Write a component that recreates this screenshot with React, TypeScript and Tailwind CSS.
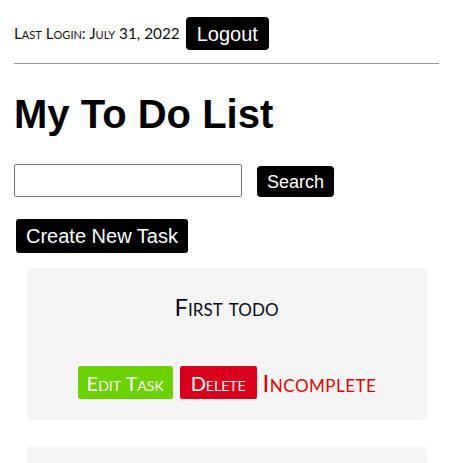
import React, { useState } from "react";

type Todo = { id: number; title: string; done: boolean };

const sc = { fontFamily: "Lato, 'Open Sans', sans-serif", fontVariant: "small-caps" } as const;

export default function App() {
  const [query, setQuery] = useState("");
  const [todos] = useState<Todo[]>([
    { id: 1, title: "First todo", done: false },
    { id: 2, title: "Second todo", done: false },
  ]);

  return (
    <div className="px-[14px] pt-[17px] font-['Liberation_Sans',Arial,sans-serif] text-black">
      <div className="flex items-center gap-[6px]">
        <span className="text-[15.3px] text-[#111]" style={sc}>
          Last Login: July 31, 2022
        </span>
        <button className="h-[33px] rounded-[4px] bg-black px-[11px] text-[20px] leading-none text-white">
          Logout
        </button>
      </div>

      <hr className="mt-[13px] border-t border-[#999]" />

      <h1 className="mt-[26px] text-[40px] font-bold leading-[48px]">My To Do List</h1>

      <div className="mt-[26px] flex items-center gap-[15px]">
        <input
          value={query}
          onChange={(e) => setQuery(e.target.value)}
          className="h-[33px] w-[228px] rounded-[2px] border border-[#767676] px-1 text-[16px] outline-none"
        />
        <button className="mt-[2px] h-[31px] rounded-[4px] bg-black px-[10px] text-[18px] leading-none text-white">
          Search
        </button>
      </div>

      <button className="ml-[2px] mt-[22px] h-[34px] rounded-[3px] bg-black px-[10px] text-[20px] leading-none text-white">
        Create New Task
      </button>

      <div className="mt-[15px] flex flex-col items-center gap-[26px]">
        {todos.map((t) => (
          <div key={t.id} className="w-[400px] rounded-[5px] bg-[#f5f5f5] pb-[20px] pt-[24px] text-center">
            <p className="text-[24px] leading-[30px] text-[#0a0a1a]" style={sc}>
              {t.title}
            </p>
            <div className="mt-[43px] flex items-center justify-center gap-[5px]">
              <button
                className="h-[35px] rounded-[3px] border border-white bg-[#6bd100] px-[9px] text-[20px] leading-none text-white"
                style={sc}
              >
                Edit Task
              </button>
              <button
                className="h-[35px] rounded-[3px] border border-white bg-[#d9001b] px-[11px] text-[20px] leading-none text-white"
                style={sc}
              >
                Delete
              </button>
              <span className="text-[24px] leading-none tracking-[0.5px] text-[#e00000]" style={sc}>
                {t.done ? "Complete" : "Incomplete"}
              </span>
            </div>
          </div>
        ))}
      </div>
    </div>
  );
}
